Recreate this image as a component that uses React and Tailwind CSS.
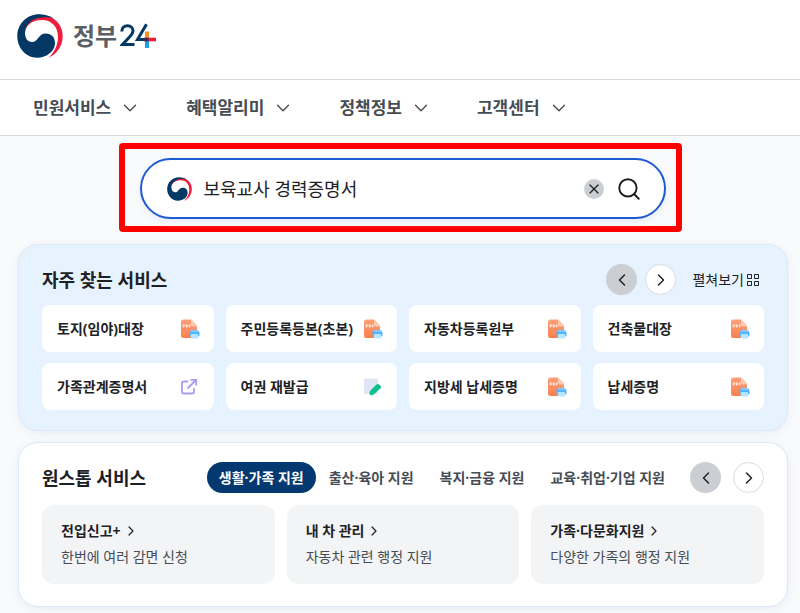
import { ChevronDown, ChevronLeft, ChevronRight, Search, X } from "lucide-react";

const menus = ["민원서비스", "혜택알리미", "정책정보", "고객센터"];

const services = [
  { name: "토지(임야)대장", icon: "pdf" },
  { name: "주민등록등본(초본)", icon: "pdf" },
  { name: "자동차등록원부", icon: "pdf" },
  { name: "건축물대장", icon: "pdf" },
  { name: "가족관계증명서", icon: "link" },
  { name: "여권 재발급", icon: "edit" },
  { name: "지방세 납세증명", icon: "pdf" },
  { name: "납세증명", icon: "pdf" },
];

const tabs = ["생활·가족 지원", "출산·육아 지원", "복지·금융 지원", "교육·취업·기업 지원"];

const oneStop = [
  { title: "전입신고+", text: "한번에 여러 감면 신청" },
  { title: "내 차 관리", text: "자동차 관련 행정 지원" },
  { title: "가족·다문화지원", text: "다양한 가족의 행정 지원" },
];

function Emblem({ className }) {
  return (
    <svg viewBox="0 0 46 44" className={className} aria-hidden="true">
      <path
        fill="#f01c3c"
        d="M8 18C7.500 8 16 1.800 26 1.800C37.500 1.800 45.700 11 45.700 22C45.700 32 40 40 31.500 43.700C37.500 38 41 31 41 23C41 12 34 6 25 6C16 6 9.500 10 8 18Z"
      />
      <path
        fill="#033864"
        d="M37 4.500C32 1.500 27 .3 22 .3C10 .3 .3 10 .3 22C.3 34 9 43.700 20 43.700C30 43.700 38 37 38 29C38 23 34 19.500 29 19.500C21 19.500 21.500 28 15 28C10.500 28 8 24 8 19C8 10 16 3.500 25 3.500C30 3 34 3.500 37 4.500Z"
      />
    </svg>
  );
}

function Mark24() {
  return (
    <svg viewBox="0 0 36 26" className="h-[26px] w-9" fill="none" role="img" aria-label="24">
      <path d="M1.800 8.500C1.800 4.500 4.500 2.700 7.500 2.700C11 2.700 13 5 13 7.800C13 10.500 11.500 12 9.500 14L2.500 21.500H14.500" stroke="#033864" strokeWidth="3" />
      <path d="M26.500 1.200L17.500 16.500H25" stroke="#033864" strokeWidth="3" />
      <path d="M27 8.500V15" stroke="#f6921e" strokeWidth="4" />
      <path d="M27 18V25" stroke="#1ea0e4" strokeWidth="4" />
      <path d="M27 16.500H36" stroke="#f01c3c" strokeWidth="3.600" />
      <path d="M24 16.500H28.500" stroke="#3d2a5c" strokeWidth="3.600" />
    </svg>
  );
}

function PdfIcon() {
  return (
    <svg viewBox="0 0 20 20" className="size-5" aria-hidden="true">
      <defs>
        <linearGradient id="sheet" x1="0" y1="0" x2="0" y2="1">
          <stop offset="0" stopColor="#fda07a" />
          <stop offset="1" stopColor="#f9804f" />
        </linearGradient>
      </defs>
      <path fill="url(#sheet)" d="M3.500 .5H11L17 6.500V17Q17 19 15 19H3.500Q1 19 1 16.500V3Q1 .5 3.500 .5Z" />
      <path fill="#fdc9b2" d="M11 .5L17.500 7.500H13Q11 7.500 11 5.500Z" />
      <path fill="none" stroke="#fff" strokeWidth=".8" d="M3.200 8.500V5.800H4.500Q5.300 6.600 4.500 7.300H3.200M6.300 5.800V8.100H7Q8.600 7 7 5.800ZM9.400 8.500V5.900H10.800M9.400 7.200H10.500" />
      <rect x="9.500" y="12" width="10" height="5.500" rx="1.500" fill="#52b2fb" />
      <rect x="11" y="10.800" width="7" height="2.400" rx=".6" fill="#7cc8ff" />
      <rect x="10.800" y="15" width="7.200" height="4.500" rx=".8" fill="#b5e6fe" />
    </svg>
  );
}

function LinkIcon() {
  return (
    <svg viewBox="0 0 20 20" className="size-5" fill="none" stroke="#ab9cf2" strokeWidth="1.800" aria-hidden="true">
      <path d="M8 4.500H4Q2 4.500 2 6.500V14.500Q2 16.500 4 16.500H12Q14 16.500 14 14.500V11" />
      <path d="M7.500 11.500L15.500 3.500M10.500 2.800H16.200V8.500" />
    </svg>
  );
}

function EditIcon() {
  return (
    <svg viewBox="0 0 20 20" className="size-5" aria-hidden="true">
      <rect x="1" y="1.500" width="14" height="15.500" rx="1.500" fill="#dfe5f4" />
      <path fill="#10bf8d" d="M13.500 7.500Q14.500 6.500 15.800 7.200L17.700 9Q18.700 10 17.500 11.200L11 17.300Q9.500 18.600 7 18.300Q6 16 7 14Z" />
    </svg>
  );
}

const icons = { pdf: PdfIcon, link: LinkIcon, edit: EditIcon };

function Pager({ className }) {
  return (
    <div className={className}>
      <button type="button" aria-label="이전" className="flex size-[31px] items-center justify-center rounded-full bg-[#cbced3]">
        <ChevronLeft className="size-5" strokeWidth={1.8} />
      </button>
      <button type="button" aria-label="다음" className="flex size-[31px] items-center justify-center rounded-full border border-[#d9dce0] bg-white">
        <ChevronRight className="size-5" strokeWidth={1.8} />
      </button>
    </div>
  );
}

export default function App() {
  return (
    <div className="min-h-screen bg-[#f9fafc] pb-1.5 font-['Noto_Sans','Noto_Sans_CJK_KR',sans-serif] text-sm text-[#1e2124]">
      <header className="border-b border-[#d8dadd] bg-white">
        <div className="flex h-20 items-center border-b border-[#d8dadd] px-[17px] pb-2">
          <a href="#home" className="flex items-center" aria-label="정부24">
            <Emblem className="h-11 w-[46px]" />
            <span className="mr-[3px] ml-2.5 text-2xl leading-8 font-bold text-[#5b5e62]">정부</span>
            <Mark24 />
          </a>
        </div>
        <nav className="flex h-[55px] items-center gap-[45px] px-[33px]">
          {menus.map((menu) => (
            <button key={menu} type="button" className="flex items-center gap-2 text-[17px] leading-6 font-bold text-[#464c53]">
              {menu}
              <ChevronDown className="size-[22px]" strokeWidth={1.5} />
            </button>
          ))}
        </nav>
      </header>

      <div className="mx-auto mt-[7px] w-[563px] max-w-full rounded-sm border-6 border-[#ff0000] pt-[9px] pr-2.5 pb-[7px] pl-[15px]">
        <form className="flex h-[61px] items-center rounded-full border-2 border-[#1f5bd0] bg-white pr-[22px] pl-[25px] shadow-[0_3px_6px_#e6ecf8]">
          <Emblem className="h-6 w-[25px]" />
          <input
            type="text"
            aria-label="검색어"
            defaultValue="보육교사 경력증명서"
            className="ml-3 min-w-0 flex-1 bg-transparent text-lg leading-6 outline-none"
          />
          <button type="button" aria-label="지우기" className="flex size-5 items-center justify-center rounded-full bg-[#cbced3]">
            <X className="size-4" strokeWidth={1.8} />
          </button>
          <button type="submit" aria-label="검색" className="ml-3">
            <Search className="size-[26px]" strokeWidth={1.8} />
          </button>
        </form>
      </div>

      <main className="pr-3 pl-[18px]">
        <section className="mt-3 rounded-[20px] border border-[#dbe8fd] bg-[#e6f3fe] px-[23px] pt-[19px] pb-5 shadow-[0_2px_8px_#e8ecf3]">
          <div className="flex items-center">
            <h2 className="flex-1 text-lg leading-6 font-bold">자주 찾는 서비스</h2>
            <Pager className="flex gap-2" />
            <a href="#all" className="mr-1 ml-4 flex items-center gap-0.5">
              펼쳐보기
              <svg viewBox="0 0 14 14" className="size-3.5" fill="none" stroke="currentColor" aria-hidden="true">
                <path d="M1.500 1.500h4v4h-4ZM8.500 1.500h4v4h-4ZM1.500 8.500h4v4h-4ZM8.500 8.500h4v4h-4Z" />
              </svg>
            </a>
          </div>
          <ul className="mt-2.5 grid grid-cols-4 gap-x-3 gap-y-[11px]">
            {services.map(({ name, icon }) => {
              const Icon = icons[icon];
              return (
                <li key={name}>
                  <a href="#service" className="flex h-[47px] items-center justify-between rounded-lg bg-white pr-3.5 pl-[15px] font-bold whitespace-nowrap">
                    {name}
                    <Icon />
                  </a>
                </li>
              );
            })}
          </ul>
        </section>

        <section className="mt-[11px] rounded-[20px] border border-[#dbe8fd] bg-white px-[23px] pt-[19px] pb-[22px] shadow-[0_2px_8px_#e8ecf3]">
          <div className="flex items-center">
            <h2 className="flex-1 text-lg leading-6 font-bold">원스톱 서비스</h2>
            <div className="mr-3 flex" role="tablist">
              {tabs.map((tab, i) => (
                <button
                  key={tab}
                  type="button"
                  role="tab"
                  aria-selected={i === 0}
                  className={
                    i === 0
                      ? "h-[31px] rounded-full bg-[#033970] px-3 font-bold whitespace-nowrap text-white"
                      : "h-[31px] px-[13px] font-bold whitespace-nowrap text-[#464c53]"
                  }
                >
                  {tab}
                </button>
              ))}
            </div>
            <Pager className="flex gap-3" />
          </div>
          <ul className="mt-3 grid grid-cols-3 gap-3">
            {oneStop.map(({ title, text }) => (
              <li key={title}>
                <a href="#onestop" className="block rounded-xl bg-[#f3f4f6] px-[19px] pt-3.5 pb-[15px]">
                  <strong className="flex items-center gap-0.5 leading-6 font-bold">
                    {title}
                    <ChevronRight className="size-4" strokeWidth={1.8} />
                  </strong>
                  <span className="mt-0.5 block leading-6 text-[#464c53]">{text}</span>
                </a>
              </li>
            ))}
          </ul>
        </section>
      </main>
    </div>
  );
}
